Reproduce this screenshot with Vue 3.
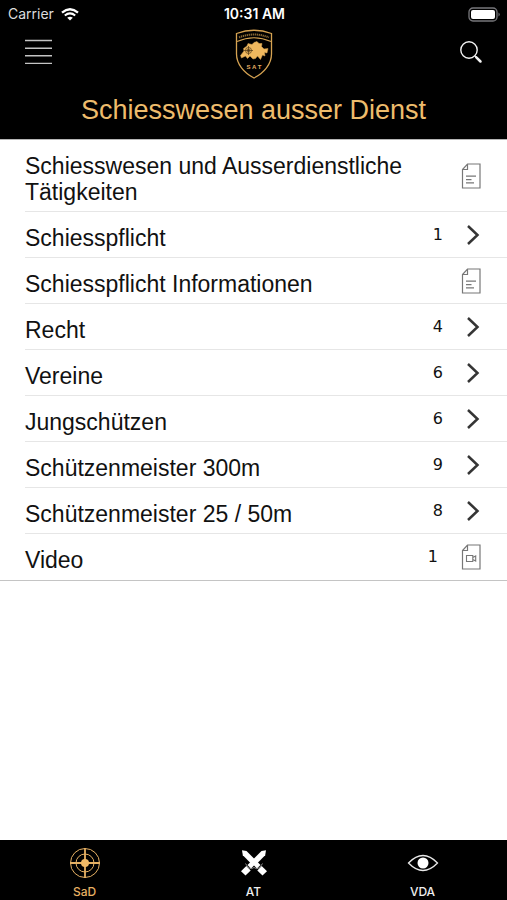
<script setup>
const items = [
  { label: 'Schiesswesen und Ausserdienstliche Tätigkeiten', kind: 'text' },
  { label: 'Schiesspflicht', count: 1, kind: 'folder' },
  { label: 'Schiesspflicht Informationen', kind: 'text' },
  { label: 'Recht', count: 4, kind: 'folder' },
  { label: 'Vereine', count: 6, kind: 'folder' },
  { label: 'Jungschützen', count: 6, kind: 'folder' },
  { label: 'Schützenmeister 300m', count: 9, kind: 'folder' },
  { label: 'Schützenmeister 25 / 50m', count: 8, kind: 'folder' },
  { label: 'Video', count: 1, kind: 'video' },
]
</script>

<template>
  <div class="app">
    <header class="top">
      <div class="status">
        <div class="carrier">
          <span>Carrier</span>
          <svg width="18" height="13" viewBox="0 0 18 13" fill="none" stroke="#fff">
            <path d="M1 4.6Q9-2.2 17 4.6" stroke-width="2.3" />
            <path d="M3.8 7.5Q9 3.2 14.2 7.5" stroke-width="2.1" />
            <path d="M9 12.6 6.2 9.8Q9 7.7 11.8 9.8Z" fill="#fff" stroke="none" />
          </svg>
        </div>
        <span class="clock">10:31 AM</span>
        <svg class="battery" width="33" height="15" viewBox="0 0 33 15">
          <rect x="1" y="1" width="28" height="13" rx="4" fill="none" stroke="#77777b" stroke-width="1.3" />
          <rect x="3" y="3" width="24" height="9" rx="2" fill="#fff" />
          <path d="M30.5 5.5Q33 7.5 30.5 9.5Z" fill="#77777b" />
        </svg>
      </div>
      <div class="toolbar">
        <button class="tool" type="button" aria-label="Menu">
          <svg width="28" height="28" viewBox="0 0 28 28" stroke="#c4c4c4" stroke-width="1.4">
            <path d="M1 2.5H28M1 10.2H28M1 17.8H28M1 25.4H28" />
          </svg>
        </button>
        <svg width="38" height="50" viewBox="0 0 38 50" fill="none" stroke="#d6a352">
          <path d="M1.5 4.5Q19-2 36.5 4.5V25C36.5 35 29 44 19 49C9 44 1.5 35 1.5 25Z" stroke-width="1.3" />
          <path d="M2 12.5Q19 5 36 12.5" stroke-width="1.2" />
          <path d="M4 8.4Q19 2.6 34 8.4" stroke-width="2" stroke-dasharray="1.3 .7" opacity=".65" />
          <path d="M5.5 26.5 9 22 8.5 19.5 12 17 13 14.5 17 15.5 19 13.5 22 12.5 24 14.5 27 14.5 26.5 17.5 29 20 33 19.5 32 24 29.5 23.5 30 27 27.5 26 25.5 30.5 22.5 27 20.5 29.5 18 30 15 27 12.5 29.5 10.5 27 6.5 29Z" fill="#efb85e" stroke-width=".5" />
          <g stroke="#5d431c" stroke-width=".8">
            <circle cx="13.5" cy="21.5" r="3" /><path d="M9 21.5H18M13.5 17V26" />
            <circle cx="13.5" cy="21.5" r="1.2" fill="#4d3717" />
          </g>
          <text x="19" y="40" text-anchor="middle" class="crest-text">S A T</text>
        </svg>
        <button class="tool" type="button" aria-label="Suchen">
          <svg width="24" height="24" viewBox="0 0 24 24" fill="none" stroke="#f2f2f2">
            <circle cx="10" cy="10" r="8.2" stroke-width="1.4" />
            <path d="M16 16 17.5 17.5" stroke-width="1.5" />
            <path d="m17.3 17.3 4.2 4.2" stroke-width="2.5" stroke-linecap="round" />
          </svg>
        </button>
      </div>
      <h1>Schiesswesen ausser Dienst</h1>
    </header>

    <main>
      <ul class="list">
        <li v-for="item in items" :key="item.label">
          <a href="#" class="row">
            <span class="label">{{ item.label }}</span>
            <span v-if="item.count" class="count">{{ item.count }}</span>
            <svg v-if="item.kind === 'folder'" class="chevron" width="14" height="22" viewBox="0 0 14 22" fill="none" stroke="#353535" stroke-width="2.5">
              <path d="M2 2 11.5 11 2 20" />
            </svg>
            <svg v-else width="20" height="26" viewBox="0 0 20 26" fill="none" stroke="#777">
              <path d="M6.5 1H19V25H1.5V6.5ZM6.5 1V6.5H1.5" stroke-width="1.2" />
              <path v-if="item.kind === 'text'" d="M5 13.2H15M5 16.6H10.5M5 19.9H13" stroke-width="1.3" />
              <path v-else d="M5.5 11.5H11.8V17.5H5.5ZM11.8 13.5 14.7 12V17L11.8 15.5" stroke-width="1.1" />
            </svg>
          </a>
        </li>
      </ul>
    </main>

    <nav class="tabs">
      <a href="#" class="tab active" aria-current="page">
        <svg width="32" height="32" viewBox="0 0 32 32" fill="none" stroke="#e7b164">
          <circle cx="16" cy="16" r="14.5" stroke-width="1" />
          <circle cx="16" cy="16" r="9" stroke-width="1" />
          <path d="M16 1V31M1 16H31" stroke-width="1.8" />
          <circle cx="16" cy="16" r="4" fill="#efb866" stroke="none" />
        </svg>
        <span>SaD</span>
      </a>
      <a href="#" class="tab">
        <svg width="32" height="32" viewBox="0 0 32 32" fill="#fff">
          <path d="M4 3.2 8.5 4 22.5 18 18.5 22 4.8 8.2Z" />
          <path d="M28 3.2 23.5 4 9.5 18 13.5 22 27.2 8.2Z" />
          <path d="M16 18.5 19.5 22 18 23 16 21 14 23 12.5 22Z" fill="#000" />
          <path d="M7.5 16.5Q9 19 10.5 20.5 13 23 16 20.5 19 23 21.5 20.5 23 19 24.5 16.5" fill="none" stroke="#8c8c8c" stroke-width="1" />
          <path d="m8.3 19 4.4 4.4-5.2 5.1-4.5-4.3Z" />
          <path d="m23.7 19-4.4 4.4 5.2 5.1 4.5-4.3Z" />
        </svg>
        <span>AT</span>
      </a>
      <a href="#" class="tab">
        <svg width="32" height="32" viewBox="0 0 32 32">
          <path d="M1.5 16Q16 1 30.5 16 16 31 1.5 16Z" fill="none" stroke="#e8e8e8" stroke-width="1.3" />
          <circle cx="16" cy="16" r="5.5" fill="#fff" />
        </svg>
        <span>VDA</span>
      </a>
    </nav>
  </div>
</template>

<style>
body {
  margin: 0;
  background: #fff;
}
</style>

<style scoped>
.app {
  display: flex;
  flex-direction: column;
  min-height: 100vh;
  font-family: "Liberation Sans", Arial, sans-serif;
  color: #111;
}
.top {
  background: #000;
  color: #fff;
  border-bottom: 1px solid #b5b5b5;
}
.status {
  display: grid;
  grid-template-columns: 1fr auto 1fr;
  align-items: center;
  height: 28px;
  padding: 0 6px 0 8px;
  font: 14px/28px Inter, sans-serif;
}
.carrier {
  display: flex;
  align-items: center;
  gap: 7px;
  color: #ddd;
}
.clock {
  font-weight: 600;
}
.battery {
  justify-self: end;
}
.toolbar {
  display: grid;
  grid-template-columns: 1fr auto 1fr;
  align-items: center;
  height: 52px;
  padding: 0 24px;
}
.tool {
  display: flex;
  justify-self: start;
  margin-bottom: 4px;
  padding: 0;
  border: 0;
  background: none;
}
.tool:last-child {
  justify-self: end;
}
.crest-text {
  font: bold 6px "Liberation Sans", sans-serif;
  fill: #e7b164;
  stroke: none;
}
h1 {
  margin: 0;
  padding: 14px 0 13px;
  font-size: 27px;
  font-weight: 400;
  line-height: 32px;
  text-align: center;
  color: #eebc6c;
}
main {
  flex: 1;
}
.list {
  margin: 0;
  padding: 0;
  list-style: none;
  border-bottom: 1px solid #c4c4c4;
}
li {
  padding-left: 25px;
}
.row {
  display: flex;
  align-items: center;
  padding-right: 26px;
  color: inherit;
  text-decoration: none;
}
li:not(:last-child) .row {
  box-shadow: inset 0 -1px #e6e6e6;
}
.label {
  flex: 1;
  padding: 13px 0 7px;
  font-size: 23px;
  line-height: 26px;
}
.count {
  margin-right: 23px;
  font: 16px/20px "DejaVu Sans", sans-serif;
}
.chevron {
  margin-right: 1px;
}
.tabs {
  display: grid;
  grid-template-columns: repeat(3, 1fr);
  height: 60px;
  background: #000;
}
.tab {
  display: flex;
  flex-direction: column;
  align-items: center;
  padding-top: 7px;
  gap: 5px;
  color: #eee;
  font: 500 12px/16px Inter, sans-serif;
  text-decoration: none;
}
.active {
  color: #e7b164;
}
</style>
